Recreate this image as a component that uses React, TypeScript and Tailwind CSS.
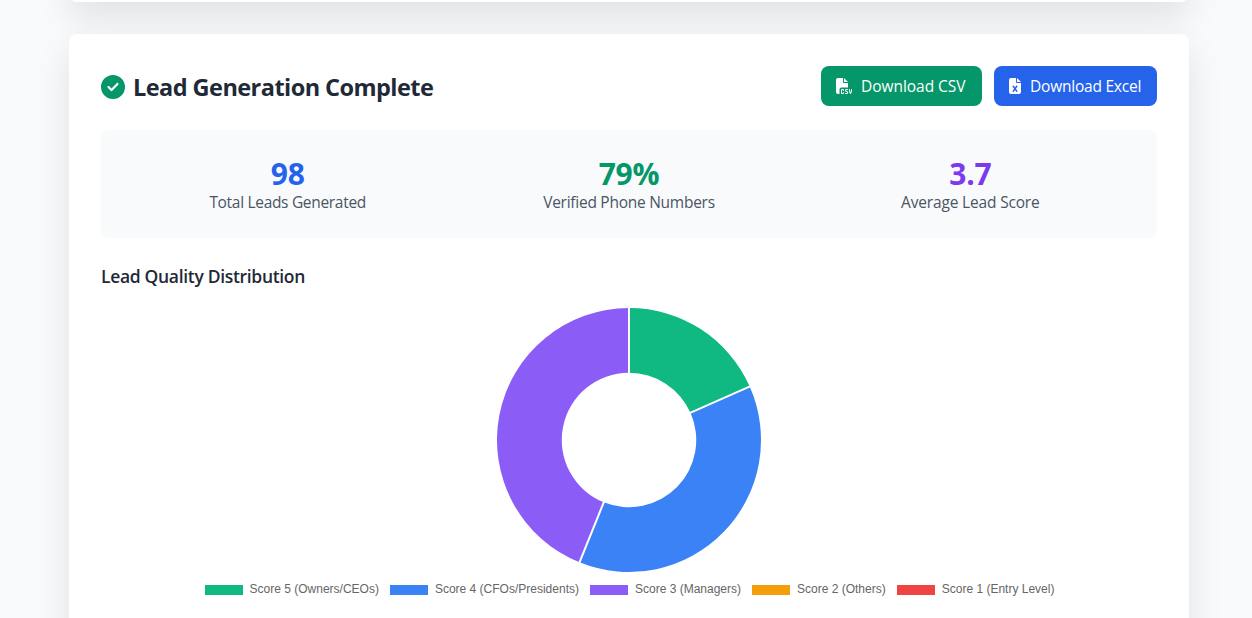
import { FaCircleCheck, FaFileCsv, FaFileExcel } from "react-icons/fa6";

const stats = [
  { value: "98", label: "Total Leads Generated", color: "text-[#2563eb]", labelSpacing: "tracking-[-0.31px]" },
  { value: "79%", label: "Verified Phone Numbers", color: "text-[#059669]", labelSpacing: "tracking-[-0.26px]" },
  { value: "3.7", label: "Average Lead Score", color: "text-[#7c3aed]", labelSpacing: "tracking-[-0.17px]" },
];

const scores = [
  { label: "Score 5 (Owners/CEOs)", count: 18, color: "#10b981", swatch: "bg-[#10b981]" },
  { label: "Score 4 (CFOs/Presidents)", count: 37, color: "#3b82f6", swatch: "bg-[#3b82f6]" },
  { label: "Score 3 (Managers)", count: 43, color: "#8b5cf6", swatch: "bg-[#8b5cf6]" },
  { label: "Score 2 (Others)", count: 0, color: "#f59e0b", swatch: "bg-[#f59e0b]" },
  { label: "Score 1 (Entry Level)", count: 0, color: "#ef4444", swatch: "bg-[#ef4444]" },
];

function Doughnut() {
  const total = scores.reduce((sum, s) => sum + s.count, 0);
  const c = 134;
  const outer = 132;
  const inner = 67.25;
  const point = (r: number, turn: number) => {
    const a = turn * 2 * Math.PI - Math.PI / 2;
    return `${(c + r * Math.cos(a)).toFixed(3)} ${(c + r * Math.sin(a)).toFixed(3)}`;
  };
  let start = 0;
  const slices = scores
    .filter((s) => s.count > 0)
    .map((s) => {
      const from = start / total;
      start += s.count;
      return { ...s, from, to: start / total };
    });
  return (
    <svg width="268" height="268" viewBox="0 0 268 268" className="block">
      {slices.map((s) => {
        const large = s.to - s.from > 0.5 ? 1 : 0;
        const d = `M${point(outer, s.from)}A${outer} ${outer} 0 ${large} 1 ${point(outer, s.to)}L${point(inner, s.to)}A${inner} ${inner} 0 ${large} 0 ${point(inner, s.from)}Z`;
        return <path key={s.label} d={d} fill={s.color} />;
      })}
      {slices.map((s) => (
        <path key={s.label} d={`M${point(inner - 1, s.from)}L${point(outer + 1, s.from)}`} stroke="#fff" strokeWidth="2" />
      ))}
    </svg>
  );
}

export default function App() {
  return (
    <div className="h-[618px] overflow-hidden bg-[#f8fafc] pl-[69px] font-['Open_Sans','Noto_Sans',sans-serif] text-base text-[#1f2937]">
      <main className="-mt-10 flex w-[1120px] flex-col gap-8">
        <section className="h-[42px] shrink-0 rounded-lg bg-white shadow-[0_15px_35px_rgba(0,0,0,0.1)]" />
        <section className="h-[700px] shrink-0 rounded-lg bg-white p-8 shadow-[0_15px_35px_rgba(0,0,0,0.1)]">
          <header className="mb-6 flex h-10 items-center justify-between">
            <h2 className="flex items-center gap-2 pt-0.5 text-[23.5px] leading-8 font-bold">
              <FaCircleCheck className="size-6 text-[#059669]" />
              <span className="tracking-[-0.55px]">Lead Generation Complete</span>
            </h2>
            <div className="flex gap-3 text-[15.5px] leading-6 text-white">
              <button className="flex h-10 w-[161px] items-center gap-[9px] rounded-lg bg-[#059669] pl-[15px] whitespace-nowrap">
                <FaFileCsv className="size-4 shrink-0" />
                <span className="tracking-[-0.04px]">Download CSV</span>
              </button>
              <button className="flex h-10 w-[163px] items-center gap-[9px] rounded-lg bg-[#2563eb] pl-[15px] whitespace-nowrap">
                <FaFileExcel className="h-4 w-3 shrink-0" />
                <span className="tracking-[-0.22px]">Download Excel</span>
              </button>
            </div>
          </header>

          <div className="mb-6 grid grid-cols-3 gap-4 rounded-lg bg-[#f8fafc] p-6 text-center">
            {stats.map((s) => (
              <div key={s.label}>
                <div className={`pt-[3px] text-3xl leading-[33px] font-bold tracking-[-0.2px] ${s.color}`}>{s.value}</div>
                <div className={`text-[15.5px] leading-6 text-[#4b5563] ${s.labelSpacing}`}>{s.label}</div>
              </div>
            ))}
          </div>

          <h3 className="mb-4 text-[17.5px] leading-7 font-semibold tracking-[-0.32px]">Lead Quality Distribution</h3>
          <div className="flex flex-col items-center">
            <Doughnut />
            <ul className="mt-[9px] flex gap-[10px] font-['Liberation_Sans',Arial,sans-serif] text-xs leading-3 text-[#666]">
              {scores.map((s) => (
                <li key={s.label} className="flex gap-[6px] whitespace-nowrap">
                  <span className={`mt-px h-3 w-10 border border-white ${s.swatch}`} />
                  <span>{s.label}</span>
                </li>
              ))}
            </ul>
          </div>
        </section>
      </main>
    </div>
  );
}
